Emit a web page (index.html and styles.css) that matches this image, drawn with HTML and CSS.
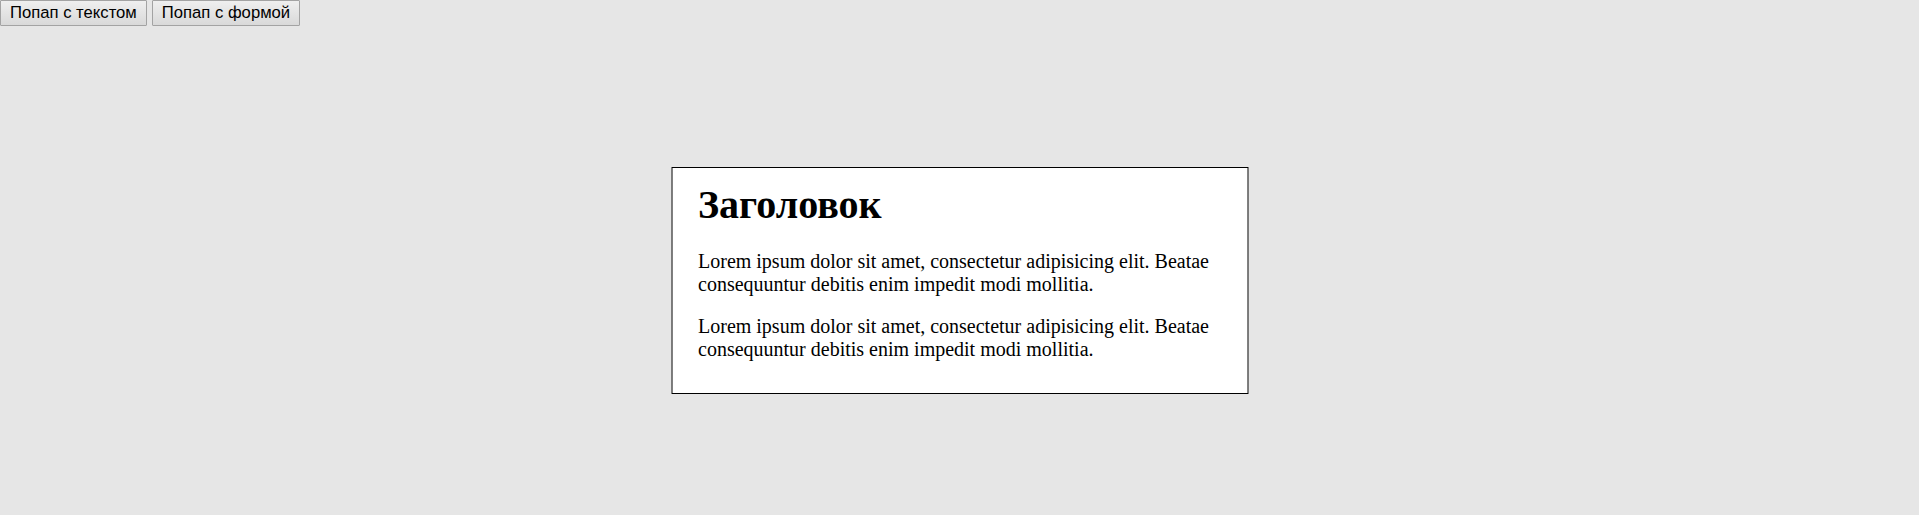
FILE: index.html
```html
<!DOCTYPE html>
<html lang="ru">
<head>
<meta charset="utf-8">
<title>Попап</title>
<link rel="stylesheet" href="styles.css">
</head>
<body>
<div class="toolbar">
  <button class="btn" type="button">Попап с текстом</button>
  <button class="btn" type="button">Попап с формой</button>
</div>
<div class="popup">
  <h1 class="popup-title">Заголовок</h1>
  <p class="popup-text">Lorem ipsum dolor sit amet, consectetur adipisicing elit. Beatae consequuntur debitis enim impedit modi mollitia.</p>
  <p class="popup-text">Lorem ipsum dolor sit amet, consectetur adipisicing elit. Beatae consequuntur debitis enim impedit modi mollitia.</p>
</div>
</body>
</html>
```

FILE: styles.css
```css
html, body {
  margin: 0;
  padding: 0;
}
body {
  background: #e6e6e6;
  font-family: "Liberation Serif", "Times New Roman", serif;
  font-size: 20px;
  color: #000;
  min-height: 515px;
}
.toolbar {
  display: flex;
  gap: 5px;
}
.btn {
  font-family: "Liberation Sans", Arial, sans-serif;
  font-size: 16.67px;
  color: #000;
  height: 26px;
  padding: 0 9px;
  margin: 0;
  border: 1px solid #a3a3a3;
  border-radius: 1px;
  background: linear-gradient(#efefef, #d9d9d9);
  line-height: 24px;
}
.popup {
  position: absolute;
  top: 167px;
  left: 50%;
  transform: translateX(-50%);
  width: 525px;
  padding: 15px 24px 13px 26px;
  background: #fff;
  border: 1px solid #000;
}
.popup-title {
  font-size: 40px;
  font-weight: bold;
  margin: 0 0 23px;
  line-height: 44px;
}
.popup-text {
  margin: 20px 0;
  line-height: 22.5px;
}
```
